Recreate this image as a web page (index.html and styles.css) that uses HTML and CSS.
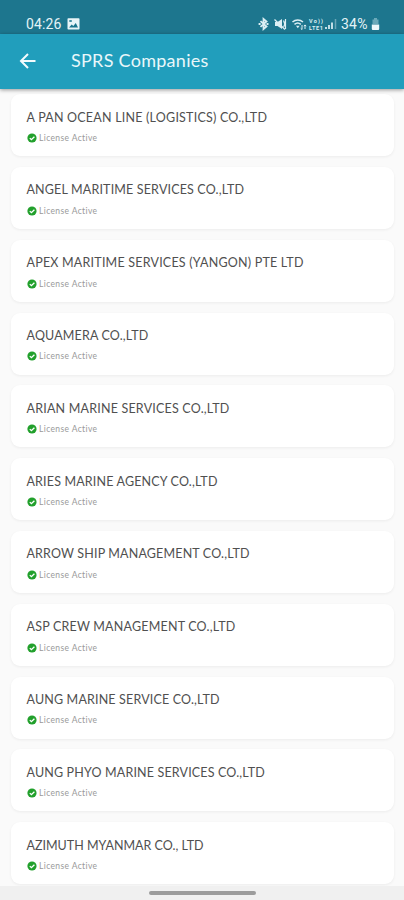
FILE: index.html
```html
<!DOCTYPE html>
<html lang="en">
<head>
<meta charset="utf-8">
<title>SPRS Companies</title>
<link rel="stylesheet" href="styles.css">
</head>
<body>
<svg class="defs" width="0" height="0" aria-hidden="true">
  <symbol id="check" viewBox="0 0 10 10"><circle cx="5" cy="5" r="4.6" fill="#22a02c"/><path d="M2.8 5.1 4.4 6.7 7.4 3.7" fill="none" stroke="#fff" stroke-width="1.3"/></symbol>
</svg>
<div class="screen">
  <div class="status">
    <span class="time">04:26</span>
    <svg class="photo" width="13" height="12" viewBox="0 0 13 12"><rect x=".5" y=".3" width="12" height="11.2" rx=".8" fill="#e9f5f8"/><path d="M2 9.5 4.7 6.4 6.3 8 8.8 5 11 9.5Z" fill="#1d768e"/><path d="M2.3 2.2h2.5v1.6H2.3z" fill="#1d768e"/></svg>
    <div class="indicators">
      <svg width="80" height="16" viewBox="0 0 80 16" fill="none" stroke="#dceff4">
        <path d="M2.5 5.2 8.5 10.5 5.5 13V3L8.5 5.5 2.5 10.8" stroke-width="1.8"/><path d="M.6 8h2M8.5 8h2" stroke-width="2"/>
        <path d="M17 6h2.5L24 3v10L19.5 10H17Z" fill="#dceff4" stroke="none"/><path d="M16.5 3.5 27 13.5" stroke-width="1.3"/><path d="M25.5 4.5c1.3 2 1.3 4.5.2 6.5M27.5 3v10" stroke-width="1.2"/>
        <path d="M34.5 6c3-2.7 7.5-2.7 10.5 0M36.5 8.4c2-1.7 4.5-1.7 6.3 0" stroke-width="1.5"/><path d="m38 9.8 1.8 2.4 1.8-2.4Z" fill="#dceff4" stroke="none"/><path d="M44 9v4.5m-1.3-1.2L44 13.6M47 13V9m-1.2 1.2L47 8.9l1.200 1.300" stroke-width="1"/>
        <path d="M68 13v-2M71 13V9M74 13V6.5" stroke-width="1.7"/><path d="M77.5 13V3" stroke-width="1.5" opacity=".4"/>
        <text x="51" y="6.8" class="volte" textLength="14">Vo))</text><text x="51" y="13.8" class="volte" textLength="14">LTE1</text>
      </svg>
      <span class="percent">34%</span>
      <svg width="9" height="14" viewBox="0 0 9 14"><path d="M3 1h3v1.5h1.5V7h-6V2.5H3Z" fill="#6aa9b9"/><path d="M.8 7.5h7.4V12a1 1 0 0 1-1 1H1.8a1 1 0 0 1-1-1Z" fill="#edf8fa"/></svg>
    </div>
  </div>
  <header class="bar">
    <svg class="back" width="18" height="18" viewBox="0 0 18 18"><path d="M16.5 9H2M9 2 2 9l7 7" fill="none" stroke="#f4fbfd" stroke-width="2"/></svg>
    <h1>SPRS Companies</h1>
  </header>
  <main class="list">
    <article class="card"><h2 class="wider">A PAN OCEAN LINE (LOGISTICS) CO.,LTD</h2><p><svg><use href="#check"/></svg>License Active</p></article>
    <article class="card"><h2>ANGEL MARITIME SERVICES CO.,LTD</h2><p><svg><use href="#check"/></svg>License Active</p></article>
    <article class="card"><h2 class="wider">APEX MARITIME SERVICES (YANGON) PTE LTD</h2><p><svg><use href="#check"/></svg>License Active</p></article>
    <article class="card"><h2>AQUAMERA CO.,LTD</h2><p><svg><use href="#check"/></svg>License Active</p></article>
    <article class="card"><h2 class="wide">ARIAN MARINE SERVICES CO.,LTD</h2><p><svg><use href="#check"/></svg>License Active</p></article>
    <article class="card"><h2>ARIES MARINE AGENCY CO.,LTD</h2><p><svg><use href="#check"/></svg>License Active</p></article>
    <article class="card"><h2>ARROW SHIP MANAGEMENT CO.,LTD</h2><p><svg><use href="#check"/></svg>License Active</p></article>
    <article class="card"><h2 class="wide">ASP CREW MANAGEMENT CO.,LTD</h2><p><svg><use href="#check"/></svg>License Active</p></article>
    <article class="card"><h2>AUNG MARINE SERVICE CO.,LTD</h2><p><svg><use href="#check"/></svg>License Active</p></article>
    <article class="card"><h2>AUNG PHYO MARINE SERVICES CO.,LTD</h2><p><svg><use href="#check"/></svg>License Active</p></article>
    <article class="card"><h2 class="normal">AZIMUTH MYANMAR CO., LTD</h2><p><svg><use href="#check"/></svg>License Active</p></article>
  </main>
  <footer class="nav"><div class="handle"></div></footer>
</div>
</body>
</html>
```
FILE: styles.css
```css
* { box-sizing: border-box; margin: 0; }
body { font-family: Lato, "Noto Sans", sans-serif; background: #fafafa; overflow: hidden; }
.defs { position: absolute; }
.screen { display: flex; flex-direction: column; height: 900px; }
.status { display: flex; align-items: center; height: 34px; padding: 13px 24px 0 26px; background: #1d768e; color: #e4f3f6; flex: none; }
.time { width: 41px; font: 14px/20px Roboto, sans-serif; letter-spacing: .1px; }
.indicators { display: flex; align-items: center; margin-left: auto; }
.percent { width: 30px; margin-left: 3px; font: 14px/20px Roboto, sans-serif; letter-spacing: .2px; }
.volte { font: bold 5.5px Roboto, sans-serif; fill: #dceff4; stroke: none; }
.bar { display: flex; align-items: center; height: 55px; padding-left: 19px; background: #219ebc; color: #e9f7fa; flex: none; box-shadow: 0 1px 4px rgba(0,0,0,.4); z-index: 1; }
.back { margin: -1px 34px 0 0; }
h1 { margin-top: -3px; font: 400 18px/24px Lato, sans-serif; letter-spacing: .27px; }
.list { display: flex; flex-direction: column; gap: 10.8px; padding: 5.3px 10px 0 11px; flex: 1; min-height: 0; }
.card { height: 62px; flex: none; padding: 14.3px 16px 0 15.5px; border-radius: 9px; background: #fff; box-shadow: 0 1px 3px rgba(0,0,0,.06); }
h2 { font-size: 12.5px; line-height: 18px; font-weight: 400; color: #505050; white-space: nowrap; letter-spacing: .16px; }
h2.wide { letter-spacing: .2px; }
h2.wider { letter-spacing: .21px; }
h2.normal { letter-spacing: 0; }
.card p { display: flex; align-items: center; margin-top: 5.4px; font-size: 8.5px; line-height: 12px; color: #999; letter-spacing: .37px; }
.card p svg { width: 10px; height: 10px; margin-right: 2.5px; }
.nav { display: flex; justify-content: center; height: 14px; padding-top: 5px; background: #f0f0f0; flex: none; z-index: 1; }
.handle { width: 107px; height: 4px; border-radius: 2px; background: #9c9c9c; }
```
